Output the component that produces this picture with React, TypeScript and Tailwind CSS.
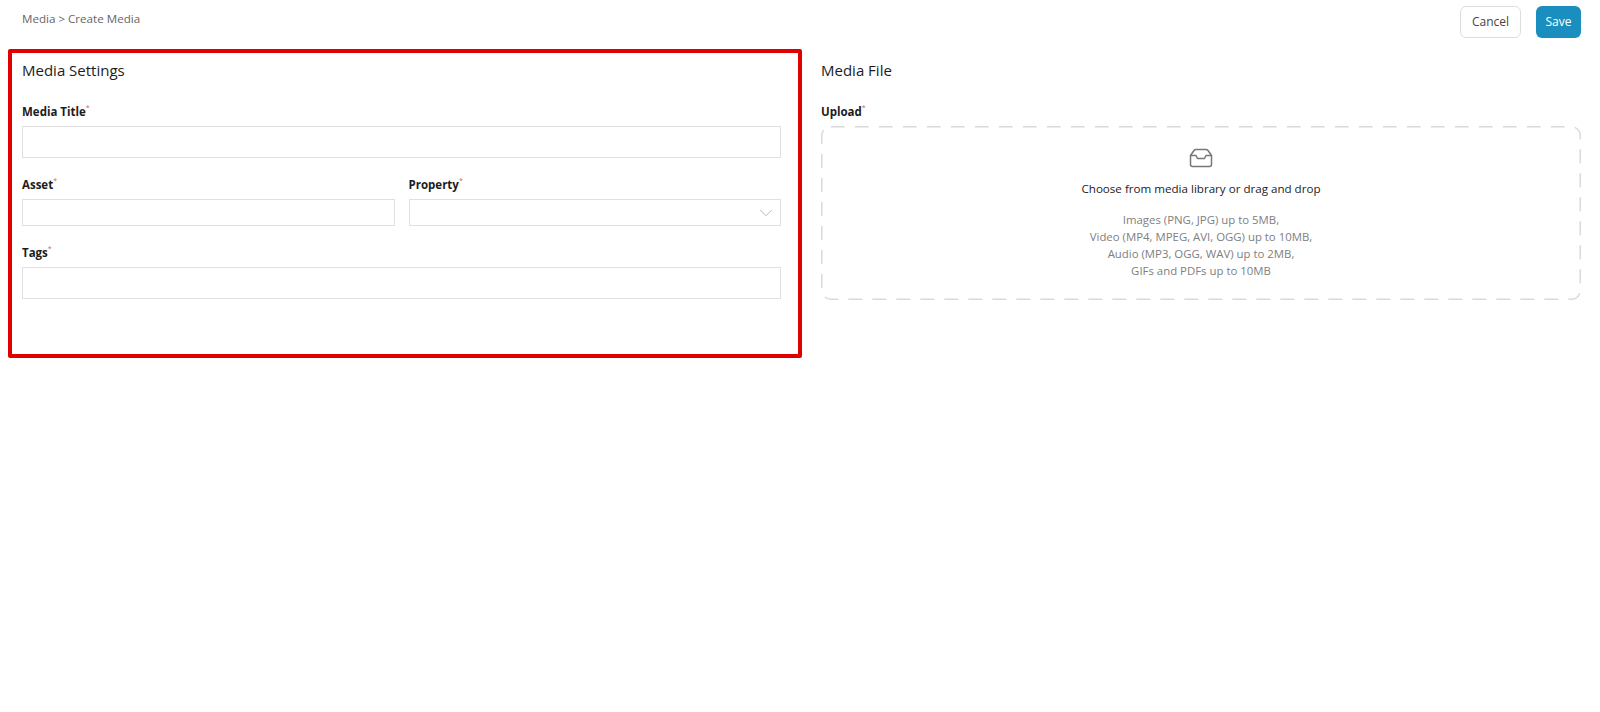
import { ChevronDown } from "lucide-react";

const inputClass = "w-full border border-[#e0e0e0] bg-white outline-none";

function Label({ text }: { text: string }) {
    return (
        <label className="block text-[11.5px] leading-[18px] font-bold text-[#1c1c1c]">
            {text}
            <sup className="relative -top-[6px] text-[7px] font-normal text-[#c96a66]">*</sup>
        </label>
    );
}

function InboxIcon() {
    return (
        <svg width="24" height="20" viewBox="0 0 24 20" fill="none" stroke="#777777" strokeWidth="1.5" strokeLinejoin="round">
            <path d="M1.500 7.500 5 2.500q.8-1 2-1h10q1.200 0 2 1l3.500 5v9a2 2 0 0 1-2 2h-17a2 2 0 0 1-2-2z" />
            <path d="M1.500 7.500H7l1.500 3h7l1.500-3h5.500" />
        </svg>
    );
}

export default function App() {
    return (
        <div className="h-[712px] bg-white font-['Open_Sans',sans-serif] text-[#1c1c1c]">
            {/* Top bar */}
            <div className="flex h-[49px] items-start justify-between pr-[19px] pl-[22px] pt-[6px]">
                <div className="pt-[4px] text-[11.6px] leading-[18px] text-[#666666]">Media &gt; Create Media</div>
                <div className="flex gap-[15px]">
                    <button className="h-8 w-[61px] rounded-md border border-[#dddddd] bg-white text-[12px] text-[#444444]">Cancel</button>
                    <button className="h-8 w-[45px] rounded-md bg-[#1a8fbf] text-[12px] text-white">Save</button>
                </div>
            </div>

            <div className="flex gap-[19px] pl-2">
                {/* Media Settings */}
                <section className="h-[309px] w-[794px] shrink-0 rounded-[2px] border-4 border-[#e00000] pt-[6px] pr-[17px] pl-[10px]">
                    <h2 className="text-[15px] leading-[22px] font-medium">Media Settings</h2>
                    <div className="mt-[22px]">
                        <Label text="Media Title" />
                        <input className={`${inputClass} mt-[5px] h-8`} />
                    </div>
                    <div className="mt-[18px] grid grid-cols-2 gap-x-[14px]">
                        <div>
                            <Label text="Asset" />
                            <input className={`${inputClass} mt-[5px] h-[27px]`} />
                        </div>
                        <div>
                            <Label text="Property" />
                            <div className={`${inputClass} mt-[5px] flex h-[27px] items-center justify-end pr-[3px]`}>
                                <ChevronDown size={22} strokeWidth={1} color="#b4b4b4" />
                            </div>
                        </div>
                    </div>
                    <div className="mt-[18px]">
                        <Label text="Tags" />
                        <input className={`${inputClass} mt-[5px] h-8`} />
                    </div>
                </section>

                {/* Media File */}
                <section className="w-[760px] shrink-0 pt-[10px]">
                    <h2 className="text-[15px] leading-[22px] font-medium">Media File</h2>
                    <div className="mt-[22px]">
                        <Label text="Upload" />
                        <div className="relative mt-[5px] flex h-[174px] flex-col items-center pt-[22px]">
                            <svg className="absolute inset-0 h-full w-full" fill="none">
                                <rect x="0.75" y="0.75" rx="9" stroke="#dadada" strokeWidth="1.5" strokeDasharray="14 10" style={{ width: "calc(100% - 1.5px)", height: "calc(100% - 1.5px)" }} />
                            </svg>
                            <InboxIcon />
                            <p className="mt-[12px] text-[11.6px] leading-[17px] font-medium text-[#1c1c1c]">Choose from media library or drag and drop</p>
                            <p className="mt-[14px] text-center text-[11.4px] leading-[17px] text-[#808080]">
                                Images (PNG, JPG) up to 5MB,
                                <br />
                                Video (MP4, MPEG, AVI, OGG) up to 10MB,
                                <br />
                                Audio (MP3, OGG, WAV) up to 2MB,
                                <br />
                                GIFs and PDFs up to 10MB
                            </p>
                        </div>
                    </div>
                </section>
            </div>
        </div>
    );
}
